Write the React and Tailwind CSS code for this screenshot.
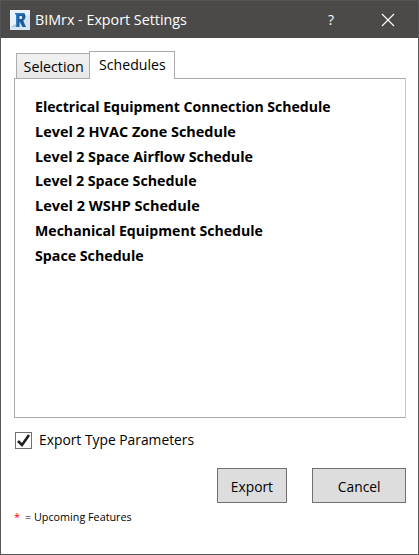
import React from "react";

const schedules = [
  { name: "Electrical Equipment Connection Schedule", fit: "scale-x-[0.938]" },
  { name: "Level 2 HVAC Zone Schedule", fit: "scale-x-[0.962]" },
  { name: "Level 2 Space Airflow Schedule", fit: "scale-x-[0.954]" },
  { name: "Level 2 Space Schedule", fit: "scale-x-[0.948]" },
  { name: "Level 2 WSHP Schedule", fit: "scale-x-[0.965]" },
  { name: "Mechanical Equipment Schedule", fit: "scale-x-[0.94]" },
  { name: "Space Schedule", fit: "scale-x-[0.947]" },
];

function RevitIcon() {
  return (
    <svg width="20" height="20" viewBox="0 0 20 20" className="block shrink-0">
      <rect width="20" height="20" fill="#d6e5f5" />
      <path d="M0 0h20v4L0 17z" fill="#e9f1fb" />
      <path d="M1 17l5-3v3z" fill="#b3c3d6" />
      <path
        fillRule="evenodd"
        d="M5 3h7.500C15 3 15.500 4.700 15.500 6.500c0 2-1 3.500-2.300 4.200L16 17h-3.500L9.500 11.500V17H6V4.500L5 4zM9.500 6v3h1.800c1.200 0 1.200-3 0-3z"
        fill="#1f5c9e"
      />
      <path d="M5 3h7.500c1 0 2 .5 2.500 1.500L6 5z" fill="#2d74ba" />
      <path d="M6 5h1.500v12H6z" fill="#2f80c6" />
    </svg>
  );
}

export default function App() {
  return (
    <div className="flex h-[555px] w-[419px] flex-col border border-[#555555] bg-white font-['Open_Sans','Noto_Sans',sans-serif] text-[15px] leading-5 whitespace-nowrap text-black">
      <header className="flex h-[37px] shrink-0 items-center bg-[#4c4a48] pl-[9px] text-white">
        <RevitIcon />
        <h1 className="mb-[2px] ml-[5px] w-[286px] shrink-0">
          <span className="inline-block origin-left scale-x-[0.953]">BIMrx - Export Settings</span>
        </h1>
        <button className="w-5 text-center text-[14px]" aria-label="Help">?</button>
        <button className="ml-[40px]" aria-label="Close">
          <svg width="14" height="14" viewBox="0 0 14 14" className="block" fill="none" stroke="white" strokeWidth="1.1">
            <path d="M1 1l12 12M13 1L1 13" />
          </svg>
        </button>
      </header>

      <main className="flex flex-1 flex-col pr-[12px] pl-[13px]">
        <div className="mt-[13px] flex h-7 items-end pl-[2px]">
          <button className="mb-px flex h-[25px] w-[73px] items-center justify-center border-t border-l border-[#acacac] bg-gradient-to-b from-[#f1f1f1] to-[#e7e7e7]">
            <span className="-mt-px ml-px inline-block scale-x-[0.95]">Selection</span>
          </button>
          <button className="relative z-10 flex h-7 w-[86px] items-start justify-center border-x border-t border-[#acacac] bg-white pt-[2px]">
            <span className="inline-block scale-x-[0.94]">Schedules</span>
          </button>
        </div>
        <ul className="-mt-px h-[340px] border border-[#acacac] border-r-[#c8c8c8] pt-[16px] pl-[20px] font-bold">
          {schedules.map((s) => (
            <li key={s.name} className="h-[24.8px] leading-[22px]">
              <span className={`inline-block origin-left ${s.fit}`}>{s.name}</span>
            </li>
          ))}
        </ul>

        <label className="mt-[12px] flex h-5 items-center pl-px">
          <svg width="17" height="17" viewBox="0 0 17 17" className="block">
            <rect x=".5" y=".5" width="16" height="16" fill="white" stroke="#707070" />
            <path d="M3 9l4 4 7-10" fill="none" stroke="#212121" strokeWidth="2.6" />
          </svg>
          <span className="mb-[2px] ml-[7px] inline-block origin-left scale-x-[0.922]">Export Type Parameters</span>
        </label>

        <div className="mt-[18px] flex justify-end gap-[25px]">
          <button className="flex h-[35px] w-[70px] items-center justify-center border border-[#707070] bg-[#dddddd] pt-px">
            <span className="inline-block scale-x-[0.92]">Export</span>
          </button>
          <button className="flex h-[35px] w-[94px] items-center justify-center border border-[#707070] bg-[#dddddd] pt-px">
            <span className="inline-block scale-x-[0.92]">Cancel</span>
          </button>
        </div>

        <p className="mt-[6px] flex text-[11px] leading-4">
          <span className="w-[11px] text-[#ff0000]">*</span>
          <span className="inline-block origin-left scale-x-[0.98]">= Upcoming Features</span>
        </p>
      </main>
    </div>
  );
}
